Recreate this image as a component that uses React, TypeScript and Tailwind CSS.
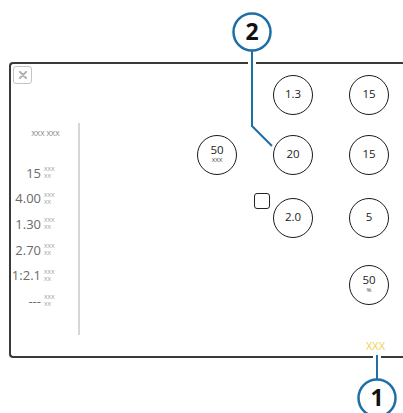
import React from "react"

type Cell = { main: string; sub?: string } | null

const rows: { mt: string; cells: Cell[] }[] = [
  { mt: "mt-[11px]", cells: [null, { main: "1.3" }, { main: "15" }] },
  { mt: "mt-[20px]", cells: [{ main: "50", sub: "XXX" }, { main: "20" }, { main: "15" }] },
  { mt: "mt-[23px]", cells: [null, { main: "2.0" }, { main: "5" }] },
  { mt: "mt-[27px]", cells: [null, null, { main: "50", sub: "%" }] },
]

const stats = ["15", "4.00", "1.30", "2.70", "1:2.1", "---"]

const Knob = ({ cell, check }: { cell: Cell; check?: boolean }) => {
  if (!cell) return <div className="w-[40px] h-[40px]" />
  return (
    <div className="relative w-[40px] h-[40px] rounded-full border-[1.5px] border-[#1a1a1a] flex flex-col items-center justify-center text-[#222]">
      {check && <div className="absolute left-[-20px] top-[-6px] w-[16px] h-[16px] rounded-[3px] border-[1.5px] border-[#222]" />}
      <span className={cell.sub ? "text-[11.5px] leading-[12px] -mt-[2px]" : "text-[11.5px] leading-[13px] -mt-[3px]"}>{cell.main}</span>
      {cell.sub && <span className="mt-[1px] text-[6px] leading-[7px] text-[#444]">{cell.sub}</span>}
    </div>
  )
}

const App = () => {
  return (
    <div className="relative w-[403px] h-[413px] bg-white overflow-hidden font-['Open_Sans',sans-serif]">
      {/* panel */}
      <div className="relative ml-[9px] mt-[62px] w-[420px] h-[296px] border-2 border-r-0 border-[#3a3a3a] rounded-l-[4px] flex">
        <div className="absolute left-[2px] top-[2px] w-[19px] h-[18px] rounded-[3px] border-[1.5px] border-[#c4c4c4] flex items-center justify-center">
          <svg width="10" height="10" viewBox="0 0 10 10">
            <path d="M2 2 L8 8 M8 2 L2 8" stroke="#b4b4b4" strokeWidth="2.2" strokeLinecap="round" />
          </svg>
        </div>

        {/* left stats */}
        <div className="mt-[59px] w-[69px] h-[212px] border-r-2 border-[#d6d6d6] flex flex-col">
          <div className="pt-[5px] pl-[2px] text-center text-[7.5px] leading-[10px] text-[#777]">XXX XXX</div>
          <div className="mt-[22px] flex flex-col">
            {stats.map((v) => (
              <div key={v} className="h-[25.6px] flex items-center">
                <span className="w-[30px] text-right text-[13px] leading-[14px] text-[#6a6a6a] whitespace-nowrap">{v}</span>
                <div className="ml-[3px] flex flex-col gap-[1px] text-[6px] leading-[6px] text-[#9a9a9a]">
                  <span>XXX</span>
                  <span>XX</span>
                </div>
              </div>
            ))}
          </div>
        </div>

        {/* knobs */}
        <div className="ml-[117px] flex flex-col">
          {rows.map((r, i) => (
            <div key={i} className={`${r.mt} grid grid-cols-[40px_40px_40px] gap-x-[36px]`}>
              {r.cells.map((c, j) => (
                <Knob key={j} cell={c} check={i === 2 && j === 1} />
              ))}
            </div>
          ))}
        </div>

        <span className="absolute left-[355px] top-[276px] text-[11px] leading-[12px] text-[#f2cf52]">XXX</span>
      </div>

      {/* callouts */}
      <svg className="absolute left-0 top-0 pointer-events-none" width="403" height="413" viewBox="0 0 403 413">
        <path d="M252 54 V72" stroke="#fff" strokeWidth="8" />
        <path d="M252 50 V126 L272 146" stroke="#1d6fa6" strokeWidth="2" fill="none" />
        <circle cx="252" cy="32" r="18.5" fill="#fff" stroke="#1d6fa6" strokeWidth="2.5" />
        <text x="252" y="40" textAnchor="middle" fontSize="23" fontWeight="700" fill="#111" fontFamily="Open Sans, sans-serif">2</text>

        <path d="M377 353 V365" stroke="#fff" strokeWidth="8" />
        <path d="M377 355 V380" stroke="#1d6fa6" strokeWidth="2" fill="none" />
        <circle cx="377" cy="398" r="18.5" fill="#fff" stroke="#1d6fa6" strokeWidth="2.5" />
        <text x="377" y="406" textAnchor="middle" fontSize="23" fontWeight="700" fill="#111" fontFamily="Open Sans, sans-serif">1</text>
      </svg>
    </div>
  )
}

export default App
